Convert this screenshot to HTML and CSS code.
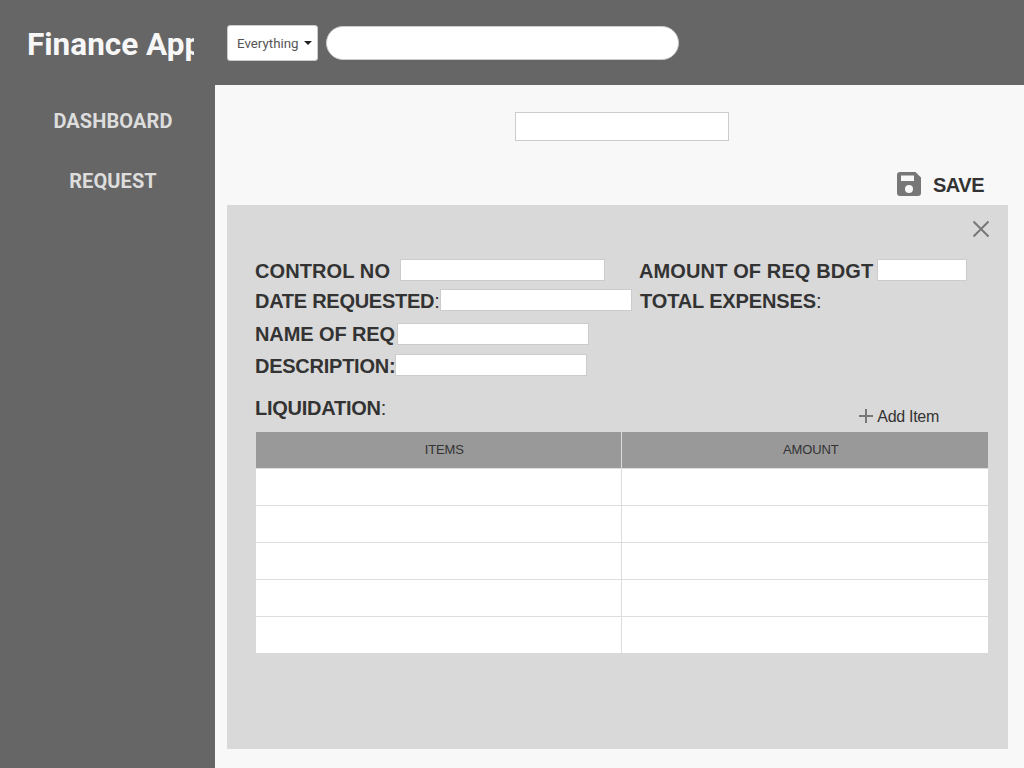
FILE: index.html
```html
<!DOCTYPE html>
<html lang="en">
<head>
<meta charset="utf-8">
<title>Finance App</title>
<link rel="stylesheet" href="styles.css">
</head>
<body>
<header class="topbar">
  <div class="brand"><span class="brand-text">Finance App</span></div>
  <button class="scope" type="button">Everything<span class="caret"></span></button>
  <input class="search" type="text">
</header>
<div class="layout">
  <nav class="sidebar">
    <a class="nav-item">DASHBOARD</a>
    <a class="nav-item">REQUEST</a>
  </nav>
  <main class="main">
    <div class="top-field"><input class="field top-input" type="text"></div>
    <div class="save-row">
      <svg class="save-icon" viewBox="0 0 24 24" width="24" height="24"><path d="M3 0h15.5L24 5.5V21a3 3 0 0 1-3 3H3a3 3 0 0 1-3-3V3a3 3 0 0 1 3-3zm1 3.5V9h13V3.5zM12 13a4 4 0 1 0 0 8 4 4 0 0 0 0-8z" fill="#777" fill-rule="evenodd"/></svg>
      <span class="save-label">SAVE</span>
    </div>
    <section class="panel">
      <div class="close-row">
        <svg class="close-icon" viewBox="0 0 18 18" width="18" height="18"><path d="M1.5 1.5l15 15M16.5 1.5l-15 15" stroke="#777" stroke-width="2" fill="none"/></svg>
      </div>
      <div class="form-row row-1">
        <div class="left-part">
          <label class="label nudge ls-control">CONTROL NO</label>
          <input class="field w-205 gap-10" type="text">
        </div>
        <div class="right-part">
          <label class="label nudge ls-amount">AMOUNT OF REQ BDGT</label>
          <input class="field w-90 gap-4" type="text">
        </div>
      </div>
      <div class="form-row row-2">
        <div class="left-part">
          <label class="label nudge ls-date">DATE REQUESTED<span class="thin">:</span></label>
          <input class="field w-192" type="text">
        </div>
        <div class="right-part shift-1">
          <label class="label nudge ls-total">TOTAL EXPENSES<span class="thin">:</span></label>
        </div>
      </div>
      <div class="form-row row-3">
        <label class="label ls-name">NAME OF REQ</label>
        <input class="field w-192 gap-2" type="text">
      </div>
      <div class="form-row row-4">
        <label class="label nudge ls-desc">DESCRIPTION:</label>
        <input class="field w-192" type="text">
      </div>
      <div class="table-head">
        <label class="label ls-liq">LIQUIDATION<span class="thin">:</span></label>
        <div class="add-item">
          <svg class="plus" viewBox="0 0 14 14" width="14" height="14"><path d="M7 0v14M0 7h14" stroke="#777" stroke-width="2" fill="none"/></svg>
          <span>Add Item</span>
        </div>
      </div>
      <table class="items">
        <colgroup><col class="col-items"><col></colgroup>
        <thead><tr><th>ITEMS</th><th>AMOUNT</th></tr></thead>
        <tbody>
          <tr><td></td><td></td></tr>
          <tr><td></td><td></td></tr>
          <tr><td></td><td></td></tr>
          <tr><td></td><td></td></tr>
          <tr><td></td><td></td></tr>
        </tbody>
      </table>
    </section>
  </main>
</div>
</body>
</html>
```
FILE: styles.css
```css
* { box-sizing: border-box; }
html, body { margin: 0; height: 100%; }
body { width: 1024px; height: 768px; overflow: hidden; background: #f8f8f8; font-family: "Liberation Sans", Arial, sans-serif; color: #333; }

.topbar { height: 85px; padding-top: 1px; background: #666; display: flex; align-items: center; }
.brand { width: 194px; padding: 4px 0 0 27px; overflow: hidden; white-space: nowrap; flex: none; }
.brand-text { font: 700 31.5px/44px Roboto, sans-serif; color: #f7f7f7; }
.scope { margin-left: 33px; width: 91px; height: 36px; background: #fff; border: 1px solid #ccc; border-radius: 3px; padding: 0 0 0 9px; font: 400 13.33px Roboto, sans-serif; color: #555; display: flex; align-items: center; }
.caret { width: 0; height: 0; margin-left: 5px; border-left: 4px solid transparent; border-right: 4px solid transparent; border-top: 4px solid #222; }
.search { margin-left: 8px; width: 353px; height: 34px; background: #fff; border: 1px solid #ccc; border-radius: 17px; }

.layout { display: flex; height: 683px; }
.sidebar { width: 215px; background: #666; display: flex; flex-direction: column; align-items: center; padding: 21px 0 0 11px; flex: none; }
.nav-item { font: 700 20px/30px Roboto, sans-serif; letter-spacing: 0.1px; color: #ddd; margin-bottom: 30px; }

.main { flex: 1; padding: 27px 16px 0 12px; background: #f8f8f8; }
.top-field { display: flex; justify-content: center; padding-left: 8px; }
.field { height: 22px; background: #fff; border: 1px solid #ccc; padding: 0; }
.top-input { width: 214px; height: 29px; }
.save-row { display: flex; align-items: center; height: 30px; margin-top: 29px; padding-left: 670px; }
.save-icon { flex: none; margin-bottom: 2px; }
.save-label { margin-left: 12px; font: 700 20px/30px "Liberation Sans", Arial, sans-serif; letter-spacing: -0.5px; color: #333; }
.panel { margin-top: 5px; height: 544px; background: #d9d9d9; padding: 15px 20px 0 28px; }
.close-row { display: flex; justify-content: flex-end; height: 18px; margin-right: -2px; }
.form-row { display: flex; align-items: center; height: 22px; }
.row-1 { margin-top: 21px; }
.row-2 { margin-top: 8px; }
.row-3 { margin-top: 12px; }
.row-4 { margin-top: 9px; }
.left-part { width: 384px; display: flex; align-items: center; flex: none; }
.right-part { display: flex; align-items: center; }
.shift-1 { margin-left: 1px; }
.label { font: 700 20px/22px "Liberation Sans", Arial, sans-serif; color: #333; white-space: nowrap; }
.nudge { padding-top: 2px; }
.thin { font-weight: 400; }
.ls-control { letter-spacing: 0.1px; }
.ls-amount { letter-spacing: 0.12px; }
.ls-date { letter-spacing: -0.27px; }
.ls-total { letter-spacing: -0.14px; }
.ls-name { letter-spacing: -0.1px; }
.ls-desc { letter-spacing: -0.25px; }
.ls-liq { letter-spacing: -0.25px; }
.w-205 { width: 205px; }
.w-192 { width: 192px; }
.w-90 { width: 90px; }
.gap-10 { margin-left: 10px; }
.gap-4 { margin-left: 4px; }
.gap-2 { margin-left: 2px; }
.table-head { display: flex; justify-content: space-between; align-items: flex-start; margin-top: 21px; height: 35px; }
.add-item { display: flex; align-items: center; gap: 4px; margin: 11px 49px 0 0; font-size: 16px; line-height: 18px; color: #333; letter-spacing: -0.3px; }
.plus { margin-bottom: 2px; }
.items { width: 732px; margin-left: 1px; border-collapse: collapse; table-layout: fixed; background: #fff; }
.col-items { width: 365px; }
.items th { height: 36px; padding: 0 0 0 12px; background: #999; font: 400 13px "Liberation Sans", sans-serif; letter-spacing: -0.1px; color: #333; border-left: 1px solid #ddd; }
.items th:first-child, .items td:first-child { border-left: 0; }
.items td { height: 37px; padding: 0; border-top: 1px solid #ddd; border-left: 1px solid #ddd; }
```
